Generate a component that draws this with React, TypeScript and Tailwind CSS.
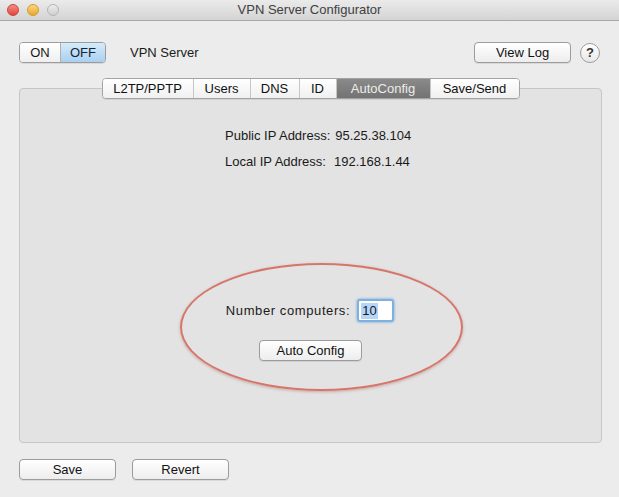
import React from 'react'

const font = { fontFamily: '"Liberation Sans", Arial, sans-serif' }

function Light({ className }: { className: string }) {
  return (
    <span
      className={`inline-block w-[12px] h-[12px] rounded-full border ${className}`}
    />
  )
}

function MacButton({
  label,
  className,
}: {
  label: string
  className?: string
}) {
  return (
    <button
      className={`h-[21px] rounded-[4px] border border-[#9c9c9c] bg-gradient-to-b from-white to-[#ededed] text-[13px] text-[#111] leading-none shadow-[0_1px_0_rgba(0,0,0,0.08)] ${className ?? ''}`}
    >
      {label}
    </button>
  )
}

const tabs = ['L2TP/PPTP', 'Users', 'DNS', 'ID', 'AutoConfig', 'Save/Send']
const tabWidths: Record<string, string> = {
  'L2TP/PPTP': 'w-[90px]',
  Users: 'w-[57px]',
  DNS: 'w-[49px]',
  ID: 'w-[37px]',
  AutoConfig: 'w-[94px]',
  'Save/Send': 'w-[89px]',
}

export default function App() {
  const active = 'AutoConfig'

  return (
    <div
      className="w-[619px] h-[497px] bg-[#ececec] flex flex-col overflow-hidden text-[#1a1a1a]"
      style={font}
    >
      {/* title bar */}
      <div className="relative h-[21px] shrink-0 flex items-center bg-gradient-to-b from-[#ebebeb] to-[#d4d4d4] border-b border-[#a8a8a8]">
        <div className="flex items-center gap-[8px] pl-[7px]">
          <Light className="border-[#c9463d] bg-gradient-to-b from-[#f08c82] to-[#e0443a]" />
          <Light className="border-[#d29b2a] bg-gradient-to-b from-[#f9d77e] to-[#eaa826]" />
          <Light className="border-[#b5b5b5] bg-gradient-to-b from-[#ececec] to-[#cfcfcf]" />
        </div>
        <div className="absolute inset-0 flex items-center justify-center text-[13px] text-[#404040]">
          VPN Server Configurator
        </div>
      </div>

      {/* top row */}
      <div className="flex items-center px-[19px] mt-[21px] h-[21px]">
        <div className="flex h-[21px] rounded-[4px] border border-[#9c9c9c] overflow-hidden text-[13px] shadow-[0_1px_0_rgba(0,0,0,0.08)]">
          <div className="w-[41px] flex items-center justify-center bg-gradient-to-b from-white to-[#efefef] border-r border-[#b0b0b0]">
            ON
          </div>
          <div className="w-[44px] flex items-center justify-center bg-gradient-to-b from-[#d6ebfa] to-[#a9d0f0] text-[#10233a]">
            OFF
          </div>
        </div>
        <span className="ml-[24px] text-[13px]">VPN Server</span>
        <div className="flex-1" />
        <MacButton label="View Log" className="w-[97px]" />
        <div className="ml-[9px] w-[20px] h-[20px] rounded-full border border-[#9c9c9c] bg-gradient-to-b from-white to-[#e8e8e8] flex items-center justify-center text-[13px] font-bold text-[#333]">
          ?
        </div>
      </div>

      {/* tabs + panel */}
      <div className="mt-[15px] pl-[19px] pr-[17px] flex flex-col">
        <div className="relative z-10 flex justify-center h-[21px] mb-[-11px]">
          <div className="flex rounded-[4px] border border-[#a3a3a3] overflow-hidden shadow-[0_1px_0_rgba(0,0,0,0.08)] text-[13px]">
            {tabs.map((t, i) => (
              <div
                key={t}
                className={`${tabWidths[t]} flex items-center justify-center ${
                  t === active
                    ? 'bg-gradient-to-b from-[#8a8a8a] to-[#737373] text-[#ececec]'
                    : 'bg-gradient-to-b from-white to-[#f0f0f0] text-[#111]'
                } ${i > 0 ? 'border-l border-[#c6c6c6]' : ''}`}
              >
                {t}
              </div>
            ))}
          </div>
        </div>

        <div className="relative h-[355px] rounded-[4px] border border-[#c6c6c6] bg-[#e3e3e3] flex flex-col">
          <div className="pl-[205px] pt-[37px] text-[13px] flex flex-col gap-[6px]">
            <div>
              Public IP Address:<span className="ml-[5px]">95.25.38.104</span>
            </div>
            <div>
              Local IP Address:<span className="ml-[8px]">192.168.1.44</span>
            </div>
          </div>

          <div className="mt-[128px] flex flex-col items-center">
            <div className="flex items-center gap-[7px] ml-[-1px]">
              <span className="text-[13px] tracking-[0.6px]">Number computers:</span>
              <div className="w-[37px] h-[23px] rounded-[3px] border-2 border-[#7fb0e0] shadow-[0_0_3px_#6aa3dd] bg-white flex items-center pl-[2px]">
                <span className="bg-[#b5d5fa] text-[13px] leading-[16px] px-[1px]">
                  10
                </span>
              </div>
            </div>
            <MacButton label="Auto Config" className="mt-[18px] w-[103px]" />
          </div>

          {/* annotation ellipse */}
          <div className="absolute left-[160px] top-[174px] w-[283px] h-[128px] rounded-[50%] border-2 border-[#d6766b] shadow-[0_1px_3px_rgba(150,60,50,0.35)] pointer-events-none" />
        </div>
      </div>

      {/* bottom buttons */}
      <div className="flex px-[19px] mt-[16px] gap-[16px]">
        <MacButton label="Save" className="w-[97px]" />
        <MacButton label="Revert" className="w-[97px]" />
      </div>
    </div>
  )
}
